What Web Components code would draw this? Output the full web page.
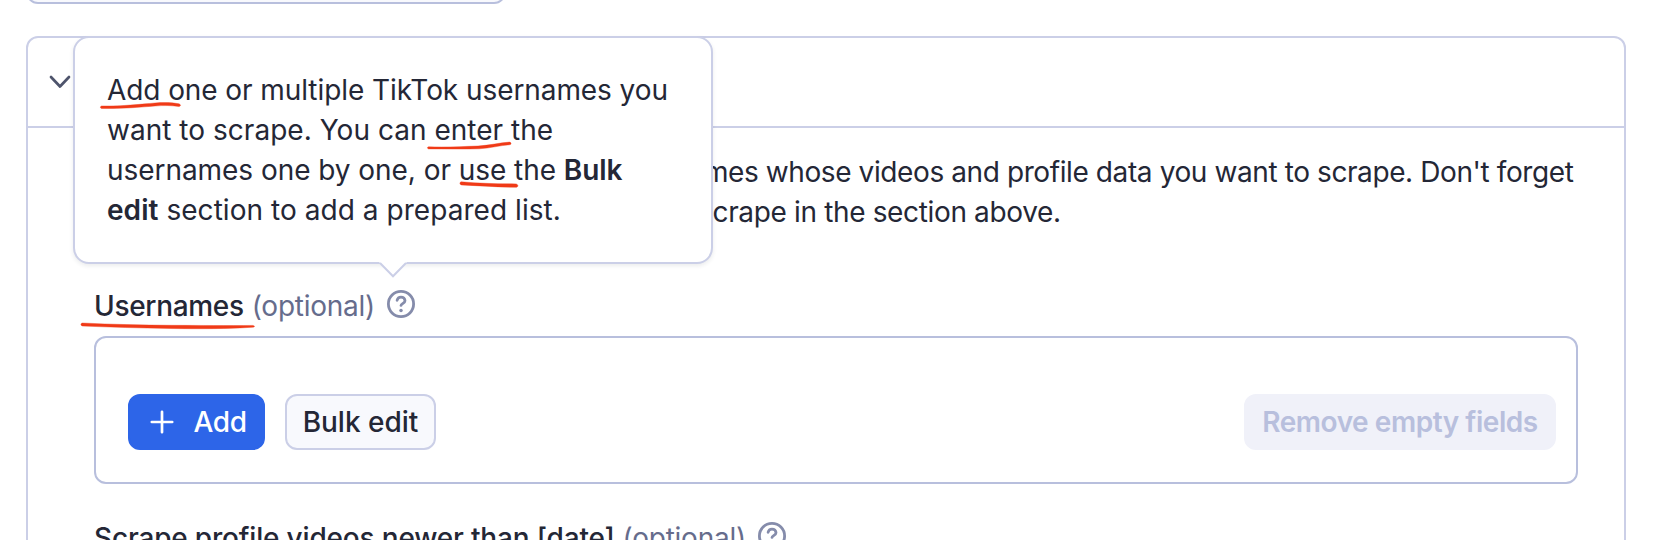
<!DOCTYPE html>
<html lang="en">
<head>
<meta charset="utf-8">
<title>Input</title>
<style>
body{margin:0;height:540px;overflow:hidden;background:#fff;font-family:Inter,"Liberation Sans",sans-serif;font-size:28px;line-height:40px;color:#242736}
</style>
</head>
<body>
<scraper-page></scraper-page>
<script>
function define(name, html){
  const t=document.createElement('template');t.innerHTML=html;
  customElements.define(name,class extends HTMLElement{
    constructor(){super();this.attachShadow({mode:'open'}).appendChild(t.content.cloneNode(true));}
  });
}
define('help-icon',`<style>:host{display:block;width:28px;height:28px}svg{display:block}</style>
<svg width="28" height="28" viewBox="0 0 28 28" fill="none" stroke="#858cab" stroke-width="2.8" stroke-linecap="round" stroke-linejoin="round"><circle cx="14" cy="14" r="12.600"/><path d="M10.1 10.3C10.6 8.2 12 7.1 14 7.1c2.3 0 4 1.5 4 3.6 0 2.700-4 3-4 4.700"/><path d="M14 20.400v.1" stroke-width="3.500"/></svg>`);
define('chevron-icon',`<style>:host{display:block}svg{display:block}</style>
<svg width="24" height="16" viewBox="0 0 24 16" fill="none" stroke="#4e546c" stroke-width="2.7" stroke-linecap="round" stroke-linejoin="round"><path d="M3 3l9 9.500L21 3"/></svg>`);
define('previous-field',`<style>:host{display:block;box-sizing:border-box;width:480px;border:2px solid #b8bfdd;border-radius:12px;background:#f8f9fd;height:24px;margin-top:-20px}</style>`);
define('field-label',`<style>:host{display:flex;height:40px;align-items:flex-start;white-space:nowrap;font-weight:500}
.n{letter-spacing:var(--name-spacing,-.32px)}
.o{color:#666c8c;font-weight:400;margin-left:8px;letter-spacing:-.25px}help-icon{margin:4px 0 0 12px}</style><span class="n"><slot></slot></span><span class="o">(optional)</span><help-icon></help-icon>`);
define('ui-button',`<style>:host{display:flex;box-sizing:border-box;height:56px;border-radius:12px;border:2px solid #cbcfe7;background:#f8f9fd;align-items:center;justify-content:center;font-weight:500;white-space:nowrap}
:host([kind=primary]){background:#2d65e8;border-color:#2d65e8;color:#fff;justify-content:flex-start;padding-left:19.5px;letter-spacing:-.4px}
:host([kind=disabled]){background:#f0f1f9;border-color:#f0f1f9;color:#b8bfdd;font-weight:600;letter-spacing:-.45px}</style><slot></slot>`);
define('string-list',`<style>:host{display:flex;box-sizing:border-box;height:148px;border:2px solid #b8bfdd;border-radius:12px;padding:56px 20px 0 32px}
.a{width:137px}.b{width:151px;margin-left:20px}.c{width:312px;margin-left:auto}ui-button{box-sizing:border-box}svg{margin-right:20px}</style>
<ui-button class="a" kind="primary"><svg width="24" height="24" viewBox="0 0 24 24" stroke="#fff" stroke-width="2.700" stroke-linecap="round"><path d="M12 1.800v20.400M1.800 12h20.400"/></svg><span>Add</span></ui-button>
<ui-button class="b"><span>Bulk edit</span></ui-button><ui-button class="c" kind="disabled"><span>Remove empty fields</span></ui-button>`);
define('help-tooltip',`<style>:host{display:block;box-sizing:border-box;width:640px;height:228px;background:#fff;border:2px solid #cbcfe7;border-radius:16px;padding:32px;box-shadow:0 2px 4px rgba(36,39,54,.09)}
svg{position:absolute;left:304px;top:223px}</style><slot></slot><svg width="28" height="18" viewBox="0 0 28 18"><path d="M0 0h28v1L14 14.500 0 1Z" fill="#fff"/><path d="M1 2L14 15.300 27 2" fill="none" stroke="#cbcfe7" stroke-width="2"/></svg>`);
define('section-card',`<style>:host{display:block;box-sizing:border-box;width:1600px;height:560px;border:2px solid #cbcfe7;border-radius:12px}
header{height:88px;border-bottom:2px solid #cbcfe7;display:flex;padding-left:20px}
chevron-icon{margin-top:36px}
.d{padding:24px 50.5px 0 654.5px;white-space:nowrap;box-sizing:border-box;height:158px;letter-spacing:-.4px}
.d span{display:block;width:max-content}.d .r{margin-left:auto}.d .s{letter-spacing:-.35px;margin-left:30px}
.body{padding:0 46px 0 66px}string-list{margin:10px 0 34px}</style>
<header><chevron-icon></chevron-icon></header>
<div class="d"><span class="r">mes whose videos and profile data you want to scrape. Don't forget</span><span class="s">crape in the section above.</span></div>
<div class="body"><field-label>Usernames</field-label><string-list></string-list><field-label style="--name-spacing:-.18px">Scrape profile videos newer than [date]</field-label></div>`);
define('pen-marks',`<style>:host{display:block}svg{display:block}</style><svg width="560" height="240" viewBox="70 95 560 240" fill="#f03a17" stroke="#f03a17" stroke-width=".4">
<path d="M101.500 106C124 106.300 142 104 155 103 164 102.200 172 102.500 179 103.800 181 104.800 181 106 179 106.600 172 105.400 164 105.300 155 106 140 107.200 122 108.800 101.500 108.500 100 107.800 100 106.700 101.500 106Z"/>
<path d="M428.500 146.800C446 147.300 462 146.600 478 146 490 145.400 500 142.600 509.500 142.100 511.500 142.600 511.500 144.200 510 144.700 500 145.400 490 148.300 479 148.800 462 149.300 446 148.900 428.500 148.900 427 148.400 427 147.300 428.500 146.800Z"/>
<path d="M461 181.800C480 183.500 498 183.800 516 183.900 518.500 184.500 518.500 187 516 187.300 498 187.100 480 185.800 461 184.900 459.500 184 459.500 182.500 461 181.800Z"/>
<path d="M82 323C112 324.400 142 325.100 172 325.300 200 325.400 228 325.700 253 325.400 255 325.800 255 326.800 253 327.200 228 328.900 200 328.900 170 328.500 140 328 110 327.200 82 326 80.500 325 80.500 323.800 82 323Z"/></svg>`);
define('scraper-page',`<style>:host{display:block;position:relative;width:1674px;height:540px;overflow:hidden}
.flow{display:flow-root;padding-left:26px}section-card{margin-top:32px}
help-tooltip{position:absolute;left:73px;top:36px}pen-marks{position:absolute;left:70px;top:95px}
.l{white-space:nowrap;display:block;width:max-content}b{font-weight:600}</style>
<div class="flow"><previous-field></previous-field><section-card></section-card></div>
<help-tooltip><span class="l" style="letter-spacing:-.08px">Add one or multiple TikTok usernames you</span><span class="l" style="letter-spacing:.03px">want to scrape. You can enter the</span><span class="l" style="letter-spacing:-.05px">usernames one by one, or use the <b>Bulk</b></span><span class="l" style="letter-spacing:.05px"><b>edit</b> section to add a prepared list.</span></help-tooltip>
<pen-marks></pen-marks>`);
</script>
</body>
</html>
